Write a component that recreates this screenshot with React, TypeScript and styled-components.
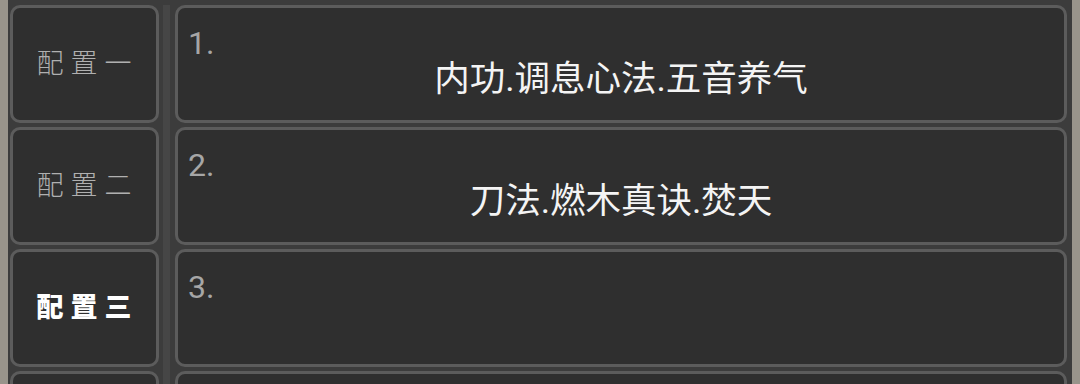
import React from "react";
import styled, { createGlobalStyle } from "styled-components";

const GlobalStyle = createGlobalStyle`
  html, body {
    margin: 0;
    padding: 0;
    background: #99948b;
    overflow: hidden;
  }
`;

type Config = {
  label: string;
  index: number;
  skill: string;
  active?: boolean;
};

const configs: Config[] = [
  { label: "配置一", index: 1, skill: "内功.调息心法.五音养气" },
  { label: "配置二", index: 2, skill: "刀法.燃木真诀.焚天" },
  { label: "配置三", index: 3, skill: "", active: true },
];

const StyledPanel = styled.div`
  display: flex;
  margin: 0 8px;
  height: 384px;
  padding-top: 5px;
  box-sizing: border-box;
  background: #3c3c3c;
  overflow: hidden;
`;

const StyledLeftColumn = styled.div`
  display: flex;
  flex-direction: column;
  gap: 4px;
  padding: 0 4px 0 2px;
  flex-shrink: 0;
`;

const StyledDivider = styled.div`
  width: 7px;
  flex-shrink: 0;
  background: #464646;
`;

const StyledRightColumn = styled.div`
  display: flex;
  flex-direction: column;
  gap: 4px;
  flex: 1;
  padding: 0 5px;
  min-width: 0;
`;

const StyledCell = styled.div`
  box-sizing: border-box;
  height: 118px;
  flex-shrink: 0;
  border: 3px solid #5c5c5c;
  border-radius: 10px;
  background: #2f2f2f;
`;

const StyledLabelCell = styled(StyledCell)<{ $active?: boolean }>`
  width: 149px;
  display: flex;
  align-items: center;
  justify-content: center;
  font-family: "Noto Sans CJK SC", sans-serif;
  font-size: 27px;
  letter-spacing: 7px;
  padding: 0 0 6px 6px;
  font-weight: ${({ $active }) => ($active ? 900 : 300)};
  color: ${({ $active }) => ($active ? "#ffffff" : "#b0b0b0")};
`;

const StyledSkillCell = styled(StyledCell)`
  display: flex;
  flex-direction: column;
  padding: 19px 10px 0 10px;
`;

const StyledNumber = styled.div`
  font-family: "Roboto", sans-serif;
  font-size: 32px;
  line-height: 32px;
  color: #a6a6a6;
`;

const StyledSkillText = styled.div`
  text-align: center;
  font-family: "Roboto", "Noto Sans CJK SC", sans-serif;
  font-size: 35.5px;
  line-height: 40px;
  color: #f4f4f4;
`;

export default function App() {
  return (
    <>
      <GlobalStyle />
      <StyledPanel>
        <StyledLeftColumn>
          {configs.map((c) => (
            <StyledLabelCell key={c.index} $active={c.active}>
              {c.label}
            </StyledLabelCell>
          ))}
          <StyledLabelCell />
        </StyledLeftColumn>
        <StyledDivider />
        <StyledRightColumn>
          {configs.map((c) => (
            <StyledSkillCell key={c.index}>
              <StyledNumber>{c.index}.</StyledNumber>
              {c.skill && <StyledSkillText>{c.skill}</StyledSkillText>}
            </StyledSkillCell>
          ))}
          <StyledSkillCell />
        </StyledRightColumn>
      </StyledPanel>
    </>
  );
}
